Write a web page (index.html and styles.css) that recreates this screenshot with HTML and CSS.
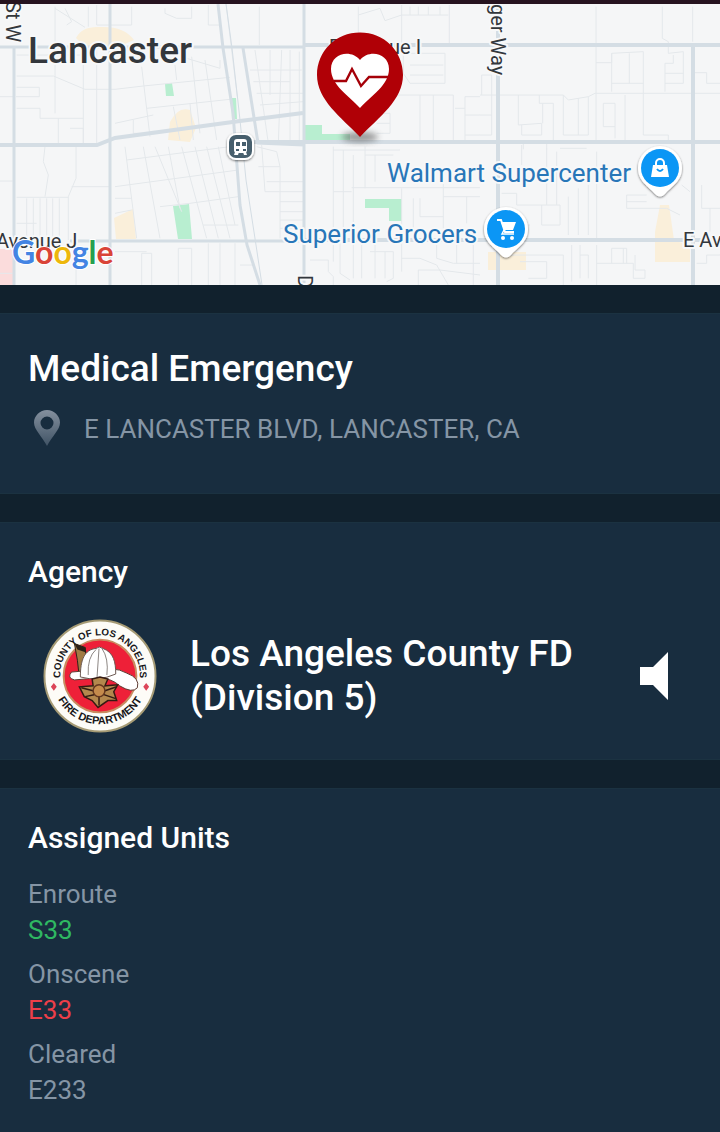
FILE: index.html
```html
<!DOCTYPE html>
<html lang="en">
<head>
<meta charset="utf-8">
<meta name="viewport" content="width=device-width, initial-scale=1">
<title>Medical Emergency</title>
<link rel="stylesheet" href="styles.css">
</head>
<body>
<div class="status-edge"></div>
<main class="incident">
  <svg class="map" viewBox="0 4 720 281" preserveAspectRatio="xMidYMid slice" role="img" aria-label="Map of Lancaster">
    <defs>
      <filter id="soft" x="-50%" y="-50%" width="200%" height="200%"><feGaussianBlur stdDeviation="3"/></filter>
      <filter id="drop" x="-30%" y="-30%" width="160%" height="160%"><feDropShadow dx="0" dy="1" stdDeviation="1" flood-opacity=".55"/></filter>
    </defs>
    <rect y="4" width="720" height="281" fill="#f5f6f7"/>
    <g fill="#faefda">
      <path d="M76 38Q82 26 100 27Q124 26 134 40L120 46H84Z"/>
      <path d="M170 122Q178 106 190 110L196 128L190 142L168 140Z"/>
      <path d="M114 218L133 209L136 239H116Z"/>
      <path d="M660 205H669L674 240L690 246V262H655V232Z"/>
      <path d="M488 252H526V270H488Z"/>
    </g>
    <g fill="#b8eed0">
      <path d="M165 84L172 83L174 96H166ZM231 98H236L237 119H232ZM173 206L189 204L192 239H178ZM305 125H322V134H350V142H305ZM365 199H402V221H389V208H365Z"/>
    </g>
    <path d="M0 249H13V285H0Z" fill="#fbdcdc"/>
    <g fill="none" stroke="#e4e8eb" stroke-width="3">
      <path transform="scale(.3333)" d="M165 20V340M165 25L255 82M195 25L215 65L200 75M265 20V80M290 15V75H395V20M495 25V40L530 55H575V20M625 15V75H660M250 135V430M290 135V430M50 228H160L255 268H345L430 258L690 232M50 165H250M0 290H40M50 262H118V290H48M50 325H120V355H250M175 355V430M210 385H250V430M400 360V400H440M425 200L450 410M530 240L525 195M575 170L600 400M560 175L660 205V180M615 180L650 420M440 325L690 298M345 370L460 345M520 320L540 420M570 310L580 420M678 10L712 290"/>
      <path transform="translate(240) scale(.3333)" d="M58 20V135M355 20V110M355 45L420 25L435 62L485 45M485 15V150M485 45H625M510 20V45M535 20V45M565 20V45M600 20V45M628 15V130M490 150V220L510 250H615V160H505M510 195H610M510 225H610M90 150V285M45 150L85 430M125 150L115 430M150 150V430M178 155V430M30 210H185M40 245H150M50 280H190M60 315L190 305M455 285H640V420M580 285V420M540 285V420M675 420V290H720M645 325H675M675 345H720M675 405H720M410 340H450V400H410M410 370H450"/>
      <path transform="translate(480) scale(.3333)" d="M348 20V430M547 20V115L565 125V160L610 155V250H555M638 20V125M555 275V190H580V165M555 220H610M348 188H395V160L490 155V405H565V420M395 160V275M448 160V250M395 250H490M0 285H250L265 300L325 290V405H250V285M295 295V405M325 290L345 280H720M640 218H680V250H720M5 285V225H35V405H0M0 345H35M115 285V375L185 370V405H125V375M178 285V310H220V420M188 310V370M370 310H405V415M370 310V380H405M435 285V425M130 430V448M200 430V448"/>
      <path transform="translate(0 145) scale(.3333)" d="M135 5L130 50L145 90L135 155M228 5V100L205 155V285M215 125H330M50 157H205M80 160V285M100 160V285M120 160V285M140 160V285M158 160V285M178 160V285M50 235H110M0 108H38M345 125L715 75M380 45L690 5M345 160H395M375 5L410 280M430 5L480 280M480 185L570 175L715 155M465 5L545 200M505 5L540 190M545 5L620 280M585 5L655 280M620 5L690 280M655 5L705 240M610 240H715M345 205L395 195M425 420V325H455V420M535 420V310H575V420M625 295V420M660 295V420M705 295V420M228 300V420M345 320H440M0 385H38"/>
      <path transform="translate(240 145) scale(.3333)" d="M65 0L75 140H190M55 65H120L110 20L50 5M120 65V280M80 110H190M120 170H190M120 200H190M120 225H190M120 250H190M280 5V350M310 15V280M340 30V280M375 5V130M405 30V110M280 15H480M375 30H460M280 140H335M335 128H720M485 130V380M520 160V250M540 160V215H610M610 80V250M610 155H720M680 155V235M210 345H265V380L280 395V420M300 295V385L330 405M340 295V400M365 300V400M405 300V400M460 320V400L440 410M435 320V400M390 320H460M485 340H540L590 360L625 420M535 420V375H600L720 390M590 300V340L640 355H720M650 300V355M700 300V420M0 360H40"/>
      <path transform="translate(480 145) scale(.3333)" d="M125 0V60M200 10V180M230 20V180M240 10H320M350 20V280M240 180V240H185V180M65 145H110V180H240M265 155V270M295 130V270M325 120V270M65 240H150M440 190V150H500M440 170H500M440 190H560L600 210M605 120L630 140M665 120V190H720M690 190V260M70 330H250V420M145 400H200V350H120M275 300V410M300 300V400M300 330H325V400M350 300V420M350 355H460V400H495V375H465V330M395 355V310H440V355M430 310V355M650 355H680V330H720"/>
    </g>
    <g fill="none" stroke="#d4dde4" stroke-width="4">
      <path d="M304 45H720M498 4V285M693 47V285M245 142H720M304 240H720M0 145H97L115 138L240 121L303 113"/>
      <path d="M0 47H304M14 48V285M110 4V285M304 4V285M70 241H304M218 4L223 48L233 113L240 205L247 245L260 285M243 48L258 143L304 145" stroke-width="3"/>
      <path d="M226 4L232 48L240 120L246 180L256 245L262 285" stroke-width="1"/>
    </g>
    <g class="map-label">
      <text x="28" y="63" class="map-city">Lancaster</text>
      <text transform="translate(6 1) rotate(90)">St W</text>
      <text transform="translate(491 4) rotate(90)">ger Way</text>
      <text x="329" y="54">E Avenue I</text>
      <text x="-4" y="248">Avenue J</text>
      <text x="683" y="247">E Ave J</text>
      <text transform="translate(298 275) rotate(90)">Division St</text>
      <g class="map-place"><text x="387" y="182">Walmart Supercenter</text><text x="283" y="243">Superior Grocers</text></g>
    </g>
    <g filter="url(#drop)">
      <rect x="227" y="133" width="27" height="27" rx="9" fill="#fff"/>
      <rect x="229" y="135" width="23" height="23" rx="7" fill="#475f6d"/>
    </g>
    <rect x="234" y="139" width="13" height="14" rx="3" fill="#fff"/>
    <path d="M236 142H240V146H236ZM242 142H246V146H242ZM236 149H239V151H236ZM243 149H246V151H243Z" fill="#475f6d"/>
    <path d="M235 152H239L238 155H234ZM243 152H246L247 155H244Z" fill="#fff"/>
    <g filter="url(#drop)" fill="#fff">
      <path d="M660 146A22 22 0 0 1 682 168C682 181 672 186 665 194Q660 199 655 194C648 186 638 181 638 168A22 22 0 0 1 660 146Z"/>
      <path d="M506 207A22 22 0 0 1 528 229C528 242 518 247 511 255Q506 260 501 255C494 247 484 242 484 229A22 22 0 0 1 506 207Z"/>
    </g>
    <circle cx="660" cy="168" r="19" fill="#0b96f5"/>
    <circle cx="506" cy="229" r="19" fill="#0b96f5"/>
    <path d="M653 165H667L669 177H651Z" fill="#fff"/>
    <path d="M656 166V163A4 4 0 0 1 664 163V166" fill="none" stroke="#fff" stroke-width="2"/>
    <path d="M657 169Q660 173 663 169" fill="none" stroke="#0b96f5" stroke-width="2"/>
    <path d="M497 220H501L505 232H514" fill="none" stroke="#fff" stroke-width="2"/>
    <path d="M501 222H516L513 230H504Z" fill="#fff"/>
    <path d="M504 230L502 234H514" fill="none" stroke="#fff" stroke-width="1.500"/>
    <circle cx="503" cy="238" r="2" fill="#fff"/><circle cx="512" cy="238" r="2" fill="#fff"/>
    <ellipse cx="360" cy="137" rx="18" ry="5" fill="#555" opacity=".6" filter="url(#soft)"/>
    <path d="M360 32.500C384 32.500 403 51 403 75C403 100 379 117 360 137C341 117 317 100 317 75C317 51 336 32.500 360 32.500Z" fill="#b00006"/>
    <path d="M360 108C349 96 331 85 331 69C331 53 351 49 360 60C369 49 389 53 389 69C389 85 371 96 360 108Z" fill="#fff"/>
    <path d="M334 81H346L352 69L361 86L369 77H388" fill="none" stroke="#a50008" stroke-width="2.400"/>
    <text class="map-brand" x="12" y="264"><tspan fill="#4384e3">G</tspan><tspan fill="#d94438">o</tspan><tspan fill="#edb70c">o</tspan><tspan fill="#4384e3">g</tspan><tspan fill="#26a04f">l</tspan><tspan fill="#d94438">e</tspan></text>
  </svg>

  <section class="card summary">
    <h1 class="title">Medical Emergency</h1>
    <div class="address">
      <svg class="address-pin" viewBox="0 0 28 38" aria-hidden="true">
        <defs><linearGradient id="pin" x2="0" y2="1"><stop stop-color="#84909e"/><stop offset="1" stop-color="#405365"/></linearGradient></defs>
        <path fill="url(#pin)" fill-rule="evenodd" d="M14 0C21 0 27 6 27 12.500C27 20 19 26 14 36C9 26 1 20 1 12.500C1 6 7 0 14 0ZM14 6.500A6.500 6.500 0 1 0 14 19.500A6.500 6.500 0 1 0 14 6.500Z"/>
      </svg>
      <span>E LANCASTER BLVD, LANCASTER, CA</span>
    </div>
  </section>

  <section class="card agency">
    <h2 class="heading">Agency</h2>
    <div class="agency-row">
      <svg class="seal" viewBox="0 0 116 116" role="img" aria-label="County of Los Angeles Fire Department seal">
        <defs>
          <path id="arc-top" d="M19 68A40.500 40.500 0 1 1 97 68"/>
          <path id="arc-bottom" d="M9 58A49 49 0 0 0 107 58"/>
        </defs>
        <circle cx="58" cy="58" r="56.500" fill="#fdfcf7" stroke="#a69b75" stroke-width="2"/>
        <circle cx="58" cy="58" r="37" fill="#ee2038" stroke="#c88c60" stroke-width="2"/>
        <g class="seal-text">
          <text class="seal-top"><textPath href="#arc-top" startOffset="50%">COUNTY OF LOS ANGELES</textPath></text>
          <text><textPath href="#arc-bottom" startOffset="50%">FIRE DEPARTMENT</textPath></text>
        </g>
        <path d="M11 65L14 69L11 73L8 69ZM105 65L108 69L105 73L102 69Z" fill="#dc4658"/>
        <path d="M32 25L43 29L45 58L37 60L35 42Z" fill="#a17b43" stroke="#2b2117" stroke-width="1"/>
        <path d="M32 25L43 29L44 34L35 31Z" fill="#2b2117"/>
        <path d="M29 54Q24 60 32 62L55 60Q70 60 78 68Q91 76 96 70Q99 60 85 55Q78 51 71 51L40 53Z" fill="#fff" stroke="#5d3a32" stroke-width="1"/>
        <path d="M38 59C38 42 42 31 54 30Q57 27 61 30C72 34 74 44 74 56Q56 64 38 59Z" fill="#fff" stroke="#6a5750" stroke-width="1"/>
        <path d="M46 57Q45 39 54 31M55 59L57 30M65 57Q67 40 60 30" fill="none" stroke="#8b8582" stroke-width="1"/>
        <path d="M50 61L58 59L66 61L63 68L76 67L72 74L75 83L66 83L56 90L50 83L42 79L37 69L51 68Z" fill="#b3884d" stroke="#351b12" stroke-width="1.500"/>
        <path d="M39 70L51 73M75 69L63 73M43 79L52 77M74 81L62 77M57 79V88" stroke="#351b12" stroke-width="1.500"/>
        <circle cx="57" cy="73" r="6" fill="#c58b4c" stroke="#64371f" stroke-width="1.500"/>
      </svg>
      <p class="agency-name">Los Angeles County FD (Division 5)</p>
      <button class="listen" type="button" aria-label="Listen">
        <svg class="listen-icon" viewBox="0 0 28 48" aria-hidden="true"><path d="M0 15H13L28 0V48L13 33H0Z" fill="#fff"/></svg>
      </button>
    </div>
  </section>

  <section class="card units">
    <h2 class="heading">Assigned Units</h2>
    <dl class="unit-list">
      <div class="unit"><dt>Enroute</dt><dd class="enroute">S33</dd></div>
      <div class="unit"><dt>Onscene</dt><dd class="onscene">E33</dd></div>
      <div class="unit"><dt>Cleared</dt><dd>E233</dd></div>
    </dl>
  </section>
</main>
</body>
</html>
```
FILE: styles.css
```css
* { box-sizing: border-box; }

body {
  margin: 0;
  min-height: 100vh;
  display: flex;
  flex-direction: column;
  background: #11212d;
  color: #fff;
  font-family: Roboto, sans-serif;
}

h1, h2, p, dl, dd { margin: 0; }

.status-edge { height: 4px; background: #26131f; }

.incident {
  flex: 1;
  display: flex;
  flex-direction: column;
  gap: 28px;
}

.map { display: block; width: 100%; height: 281px; }

.map-label {
  font-size: 20px;
  fill: #33373c;
  stroke: #f7f8f9;
  stroke-width: 4px;
  stroke-linejoin: round;
  paint-order: stroke;
}
.map-city { font-size: 37px; font-weight: 500; }
.map-place { font-size: 26px; fill: #2876b8; }
.map-brand {
  font-family: Lato, sans-serif;
  font-size: 32px;
  font-weight: 700;
  stroke: #fff;
  stroke-width: 2px;
  paint-order: stroke;
}

.card {
  padding: 31px 28px 26px;
  background: #182d3f;
  border-top: 1px solid #1b3241;
  border-bottom: 1px solid #1b3241;
}

.title { font-size: 37px; font-weight: 500; line-height: 48px; }

.summary { padding-bottom: 44px; }

.address {
  display: flex;
  align-items: center;
  gap: 23px;
  margin-top: 16px;
  padding-left: 5px;
  color: #8595a5;
  font-size: 26px;
  line-height: 40px;
}
.address-pin { flex: none; width: 28px; height: 38px; }

.heading { font-size: 30px; font-weight: 500; line-height: 36px; }

.agency-row {
  display: flex;
  align-items: center;
  gap: 32px;
  margin-top: 29px;
  padding: 0 24px 0 14px;
}
.seal { flex: none; width: 116px; height: 114px; }
.seal-text {
  font-family: "Liberation Sans", sans-serif;
  font-size: 11px;
  font-weight: 700;
  fill: #171619;
  text-anchor: middle;
}
.seal-top { font-size: 10px; }
.agency-name {
  flex: 1;
  font-size: 37px;
  font-weight: 500;
  line-height: 44px;
}
.listen {
  flex: none;
  padding: 0;
  border: 0;
  background: none;
  cursor: pointer;
}
.listen-icon { display: block; width: 28px; height: 48px; }

.units { flex: 1; }
.unit-list {
  display: grid;
  gap: 8px;
  margin-top: 20px;
  color: #8595a5;
  font-size: 26px;
  line-height: 36px;
}
.enroute { color: #2fb862; }
.onscene { color: #ed3f49; }
```
